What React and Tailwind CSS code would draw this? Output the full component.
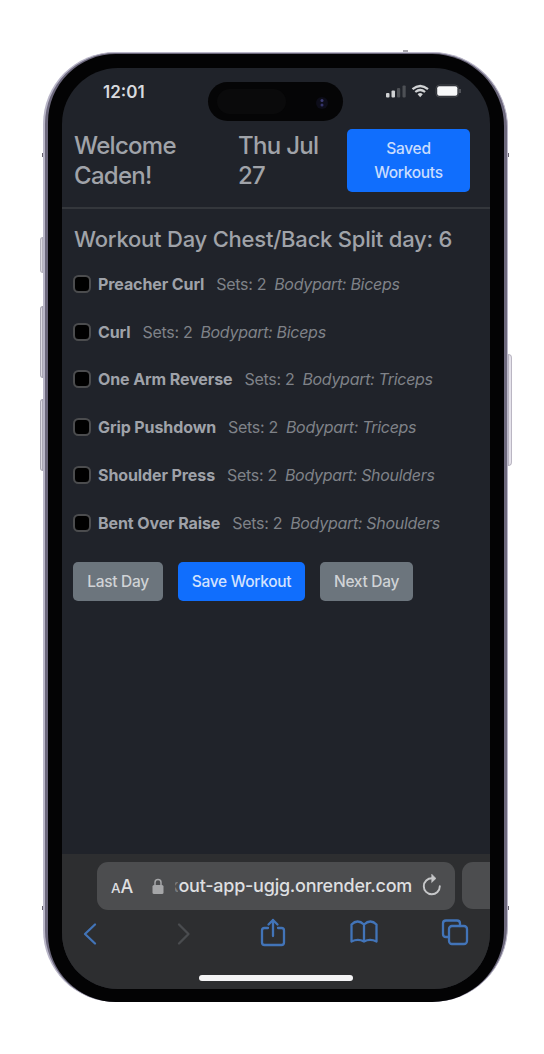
const exercises = [
  { name: "Preacher Curl", part: "Biceps" },
  { name: "Curl", part: "Biceps" },
  { name: "One Arm Reverse", part: "Triceps" },
  { name: "Grip Pushdown", part: "Triceps" },
  { name: "Shoulder Press", part: "Shoulders" },
  { name: "Bent Over Raise", part: "Shoulders" },
];

function StatusBar() {
  return (
    <div className="flex h-[52px] shrink-0 items-start pl-[41px]">
      <span className="mt-[14px] w-[105px] text-[17px] leading-[21px] font-semibold text-[#d8dadd]">12:01</span>
      <div className="mt-[14px] h-[39px] w-[135px] rounded-full bg-[#050506] px-2 py-1">
        <svg className="h-[30px] w-full" viewBox="0 0 119 30" fill="none">
          <rect x="1" y="3" width="69" height="25" rx="12.5" fill="#0a0a0b" />
          <circle cx="106" cy="17" r="6" fill="#0d0d19" />
          <circle cx="106" cy="14.5" r="1.5" fill="#3c3c75" />
          <circle cx="106" cy="19" r="1.5" fill="#34346a" />
        </svg>
      </div>
      <svg className="mt-[14px] ml-[40px] h-[18px] w-[78px]" viewBox="0 0 78 18" fill="none">
        <rect x="3" y="11" width="3.500" height="4.500" rx="1" fill="#d0d2d4" />
        <rect x="8.5" y="8.5" width="3.5" height="7" rx="1" fill="#d0d2d4" />
        <rect x="14" y="6" width="3.2" height="9.5" rx="1" fill="#4d5055" />
        <rect x="19.5" y="3.5" width="3.2" height="12" rx="1" fill="#4d5055" />
        <path d="M29.5 7.2Q37.2 .8 45 7.2" stroke="#d0d2d4" strokeWidth="2.3" />
        <path d="M32.3 10Q37.2 6 42.1 10" stroke="#d0d2d4" strokeWidth="2.2" />
        <path d="M34.6 12.2Q37.2 10 39.8 12.2L37.2 15.3Z" fill="#d0d2d4" />
        <rect x="53" y="3" width="22.5" height="12" rx="3.5" stroke="#43464b" />
        <rect x="54.2" y="4.3" width="20.2" height="9.5" rx="2" fill="#f7f8f9" />
        <path d="M77 7v4" stroke="#606368" strokeWidth="1.5" />
      </svg>
    </div>
  );
}

function Header() {
  return (
    <header className="flex h-[89px] shrink-0 items-start border-b-2 border-[#34373c] pl-3 text-[24px] leading-[30px] font-medium tracking-[-0.7px] text-[#a0a3a9]">
      <h1 className="mt-[11px] w-[164px]">Welcome<br />Caden!</h1>
      <h2 className="mt-[11px] w-[109px]">Thu Jul<br />27</h2>
      <button className="mt-[9px] h-[63px] w-[123px] rounded-[5px] bg-[#106efd] text-[15.5px] leading-[24px] font-medium tracking-[-0.3px] text-[#c9dcfd]">Saved<br />Workouts</button>
    </header>
  );
}

function Exercise({ name, part }) {
  return (
    <li className="flex h-[47.8px] items-center text-[16px] tracking-[-0.3px] whitespace-nowrap text-[#7f8288]">
      <span className="mr-[7px] size-[18px] shrink-0 rounded-[5.5px] border-[2px] border-[#4b4c4e] bg-black" />
      <strong className="mr-[12px] font-bold tracking-[-0.1px] text-[#9fa2a9]">{name}</strong>
      <span className="mr-[8px]">Sets: 2</span>
      <em>Bodypart: {part}</em>
    </li>
  );
}

function Workout() {
  return (
    <main className="flex-1 pl-[11px]">
      <h2 className="mt-[15px] pl-px text-[22px] leading-[30px] font-medium tracking-[-0.22px] whitespace-nowrap text-[#a0a3a9]">Workout Day Chest/Back Split day: 6</h2>
      <ul className="mt-[6px]">
        {exercises.map((e) => <Exercise key={e.name} {...e} />)}
      </ul>
      <div className="mt-[15px] flex gap-[15px] text-[15.5px] font-medium tracking-[-0.3px] text-[#d0d3d6]">
        <button className="h-[39px] w-[90px] rounded-[5px] bg-[#6c757d]">Last Day</button>
        <button className="h-[39px] w-[127px] rounded-[5px] bg-[#106efd] text-[#d3e2fd]">Save Workout</button>
        <button className="h-[39px] w-[93px] rounded-[5px] bg-[#6c757d]">Next Day</button>
      </div>
    </main>
  );
}

function Browser() {
  return (
    <footer className="h-[135px] shrink-0 bg-[#2d2e30]">
      <div className="flex gap-[7px] pt-[8px] pl-[35px]">
        <div className="flex h-[48px] w-[358px] shrink-0 items-center rounded-[11px] bg-[#4c4d4f] pl-[14px] text-[#dedfe0]">
          <span className="flex w-[23px] items-baseline font-medium"><span className="text-[13.5px]">A</span><span className="text-[18px]">A</span></span>
          <svg className="ml-[18px] h-[17px] w-[12px]" viewBox="0 0 12 17" fill="none">
            <rect x=".5" y="7" width="11" height="9" rx="1.5" fill="#a5a6a8" />
            <path d="M3 8V4.5a3 3 0 0 1 6 0V8" stroke="#a5a6a8" strokeWidth="1.5" />
          </svg>
          <span className="ml-[9px] flex w-[239px] justify-end text-[18px] leading-[26px] font-medium tracking-[-0.25px] whitespace-nowrap">
            <span className="flex w-[3px] justify-end overflow-hidden text-[#77787a]">k</span>
            <span>out-app-ugjg.onrender.com</span>
          </span>
          <svg className="ml-[10px] h-[24px] w-[20px]" viewBox="0 0 20 24" fill="none" stroke="#c6c7c9" strokeWidth="1.9" strokeLinecap="round">
            <path d="M11.5 4.3H10a8 8 0 1 0 7.8 8" />
            <path d="M9.8 .2 14 4.4 9.8 8.4Z" fill="#c6c7c9" strokeWidth=".5" />
          </svg>
        </div>
        <div className="h-[47px] flex-1 rounded-l-[11px] bg-[#4c4d4f]" />
      </div>
      <svg className="block h-[40px] w-full" viewBox="0 0 428 40" fill="none" stroke="#4274b8" strokeWidth="2.3" strokeLinecap="round" strokeLinejoin="round">
        <path d="M33 14.500 23 24 33 33.500" />
        <path d="m117 14.500 9.500 9.500L117 33.500" stroke="#4a4c4f" />
        <path d="M206 18h-3.5q-2.500 0-2.500 2.500v12q0 2.500 2.500 2.500h17q2.500 0 2.500-2.500v-12q0-2.500-2.500-2.500H216" />
        <path d="M211 26V10m-4.500 4.500L211 10l4.500 4.500" />
        <path d="M302 31.500q-6-3.200-12.500 0v-17q6-6 12.500 0v17q6-3.200 12.500 0v-17q-6-6-12.500 0" />
        <path d="M386 27h-2q-3 0-3-3V13.500q0-3 3-3h11q3 0 3 3V16" />
        <rect x="387" y="16" width="18" height="18" rx="3" />
      </svg>
      <div className="mt-[25px] ml-[137px] h-[6px] w-[154px] rounded-full bg-[#f4f4f5]" />
    </footer>
  );
}

export default function App() {
  return (
    <div className="relative h-[1054px] w-[544px] overflow-hidden bg-white pt-[52px] pl-[43px] font-['Inter',sans-serif]">
      <div className="absolute top-[237px] left-[40px] h-[36px] w-[3px] rounded-l border border-[#b5b2bd] bg-[#dddbe3]" />
      <div className="absolute top-[306px] left-[40px] h-[72px] w-[3px] rounded-l border border-[#aaa7b4] bg-[#dddbe3]" />
      <div className="absolute top-[399px] left-[40px] h-[72px] w-[3px] rounded-l border border-[#aaa7b4] bg-[#dddbe3]" />
      <div className="absolute top-[354px] left-[508px] h-[112px] w-[4px] rounded-r border border-[#bab6c3] bg-[#e5e2eb]" />
      <div className="absolute top-[50px] left-[403px] h-[2px] w-[5px] bg-[#a7a5ab]" />
      <div className="absolute top-[153px] left-[42px] h-[4px] w-[467px] bg-[#66616e]" />
      <div className="absolute top-[906px] left-[42px] h-[4px] w-[467px] bg-[#66616e]" />
      <div className="relative h-[950px] w-[465px] rounded-[72px_76px_76px_72px] border border-b-0 border-l-2 border-[#b9b6c8] bg-[#6c687c] pt-px pr-[3px] pl-[3px]">
        <div className="h-[948px] rounded-[68px_72px_72px_68px] bg-[#030304] pt-[14px] pl-[14px]">
          <div className="flex h-[921px] w-[428px] flex-col overflow-hidden rounded-[56px] bg-[#20232a]">
            <StatusBar />
            <Header />
            <Workout />
            <Browser />
          </div>
        </div>
      </div>
    </div>
  );
}
